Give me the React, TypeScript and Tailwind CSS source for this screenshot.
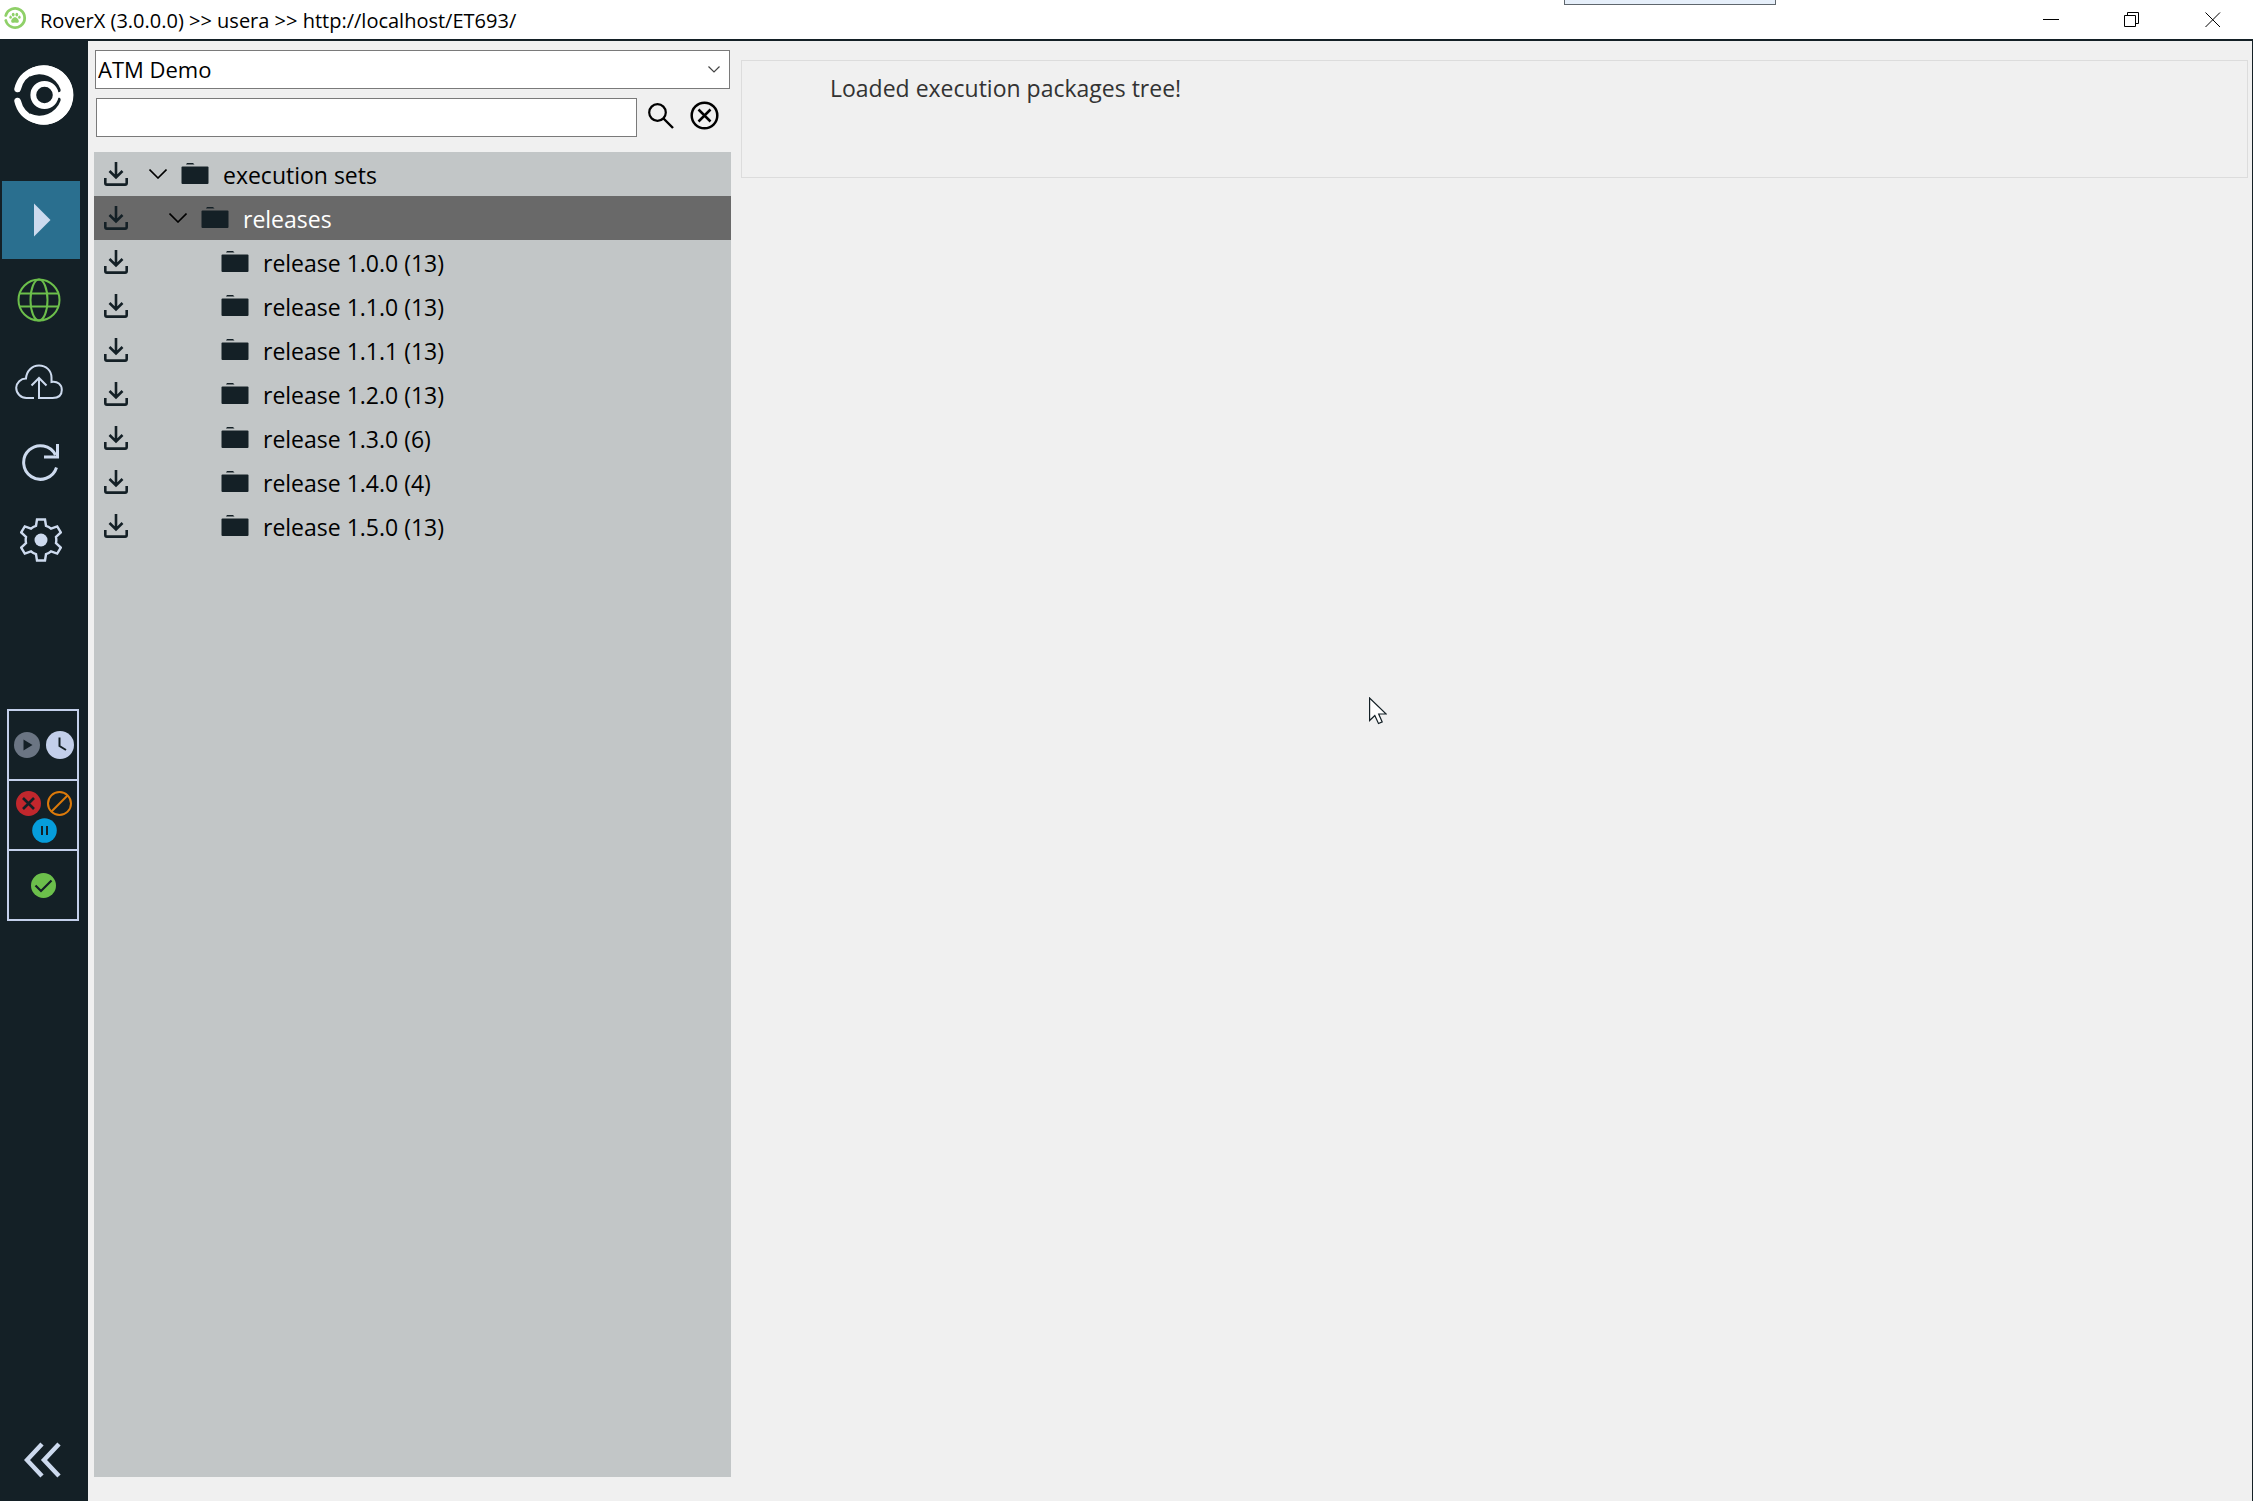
import React, { useState } from 'react';

type IconProps = { className?: string };

interface TreeNode {
  id: string;
  label: string;
  level: number;
  expandable?: boolean;
}

const TREE: TreeNode[] = [
  { id: 'sets', label: 'execution sets', level: 0, expandable: true },
  { id: 'releases', label: 'releases', level: 1, expandable: true },
  { id: 'r100', label: 'release 1.0.0 (13)', level: 2 },
  { id: 'r110', label: 'release 1.1.0 (13)', level: 2 },
  { id: 'r111', label: 'release 1.1.1 (13)', level: 2 },
  { id: 'r120', label: 'release 1.2.0 (13)', level: 2 },
  { id: 'r130', label: 'release 1.3.0 (6)', level: 2 },
  { id: 'r140', label: 'release 1.4.0 (4)', level: 2 },
  { id: 'r150', label: 'release 1.5.0 (13)', level: 2 },
];

const INDENT = ['pl-0', 'pl-5', 'pl-10'];

function AppIcon({ className }: IconProps) {
  return (
    <svg viewBox="0 0 24 24" className={className} fill="none">
      <path d="M2.8 9.5a9.6 9.6 0 1 1 0 5" stroke="#8fd068" strokeWidth="2.8" strokeLinecap="round" />
      <g fill="#8fd068">
        <ellipse cx="10.2" cy="8.6" rx="1.4" ry="1.9" />
        <ellipse cx="13.8" cy="8.6" rx="1.4" ry="1.9" />
        <ellipse cx="7.6" cy="11.2" rx="1.2" ry="1.6" />
        <ellipse cx="16.4" cy="11.2" rx="1.2" ry="1.6" />
        <path d="M12 11.2c2 0 3.8 2.4 3.8 4 0 1.8-2 1.6-3.8 1.2-1.8.4-3.8.6-3.8-1.2 0-1.6 1.8-4 3.8-4z" />
      </g>
    </svg>
  );
}

function Logo({ className }: IconProps) {
  return (
    <svg viewBox="0 0 60 60" className={className} fill="none" stroke="#fff" strokeLinecap="round">
      <path d="M3.6 24A26.3 26.3 0 1 1 3.6 36" strokeWidth="6.6" />
      {/* the ring gets thicker towards the right */}
      <path
        d="M14 5A29.6 29.6 0 1 1 14 55L16 48.4A22 22 0 0 0 46.400 36C47.600 32.500 44 31.800 43 34V26C44 28.200 47.600 27.500 46.400 24A22 22 0 0 0 16 11.600z"
        fill="#fff"
        stroke="none"
      />
      <circle cx="30.5" cy="30" r="11.2" strokeWidth="5.8" />
    </svg>
  );
}

function PlayIcon({ className }: IconProps) {
  return (
    <svg viewBox="0 0 18 34" className={className} fill="#cddaee">
      <path d="M1 .5 17.5 17 1 33.5z" />
    </svg>
  );
}

function GlobeIcon({ className }: IconProps) {
  return (
    <svg viewBox="0 0 44 44" className={className} fill="none" stroke="#6cbf4b" strokeWidth="2">
      <circle cx="22" cy="22" r="20.5" />
      <ellipse cx="22" cy="22" rx="8.5" ry="20.5" />
      <path d="M2.5 15.5h39M2.5 28.5h39" />
    </svg>
  );
}

function CloudIcon({ className }: IconProps) {
  return (
    <svg viewBox="0 0 48 36" className={className} fill="none" stroke="#cddaee" strokeWidth="2">
      <path d="M19 34h-7.5A10.2 10.2 0 0 1 1.200 23.8 9.8 9.8 0 0 1 11 14.5c.5-7.500 6-13 13-13s12.5 5 12.5 12v4.500c6-1 10.300 2.500 10.300 8S43 34 37.500 34H24V14" />
      <path d="M16.5 21.500 24 14l7.500 7.500" />
    </svg>
  );
}

function RefreshIcon({ className }: IconProps) {
  return (
    <svg viewBox="0 0 38 38" className={className} fill="none" stroke="#cddaee" strokeWidth="3">
      <path d="M34.5 24.500A16.8 16.8 0 1 1 33.500 12" />
      <path d="M35.500 1v13H22" />
    </svg>
  );
}

function GearIcon({ className }: IconProps) {
  return (
    <svg viewBox="0 0 42 44" className={className}>
      <path
        d="M17 1.500h8l1 6.300c2 .6 3.600 1.500 5 2.800l6.200-2.200 3.600 6-4.800 4.600c.4 2 .4 4 0 6l4.800 4.600-3.600 6-6.200-2.200c-1.400 1.300-3 2.200-5 2.800l-1 6.300h-8l-1-6.300c-2-.6-3.600-1.500-5-2.800l-6.200 2.200-3.600-6L6 25c-.4-2-.4-4 0-6l-4.800-4.600 3.600-6 6.200 2.200c1.400-1.300 3-2.200 5-2.800z"
        fill="none"
        stroke="#cddaee"
        strokeWidth="2.4"
      />
      <circle cx="21" cy="22" r="6.5" fill="#cddaee" />
    </svg>
  );
}

function CollapseIcon({ className }: IconProps) {
  return (
    <svg viewBox="0 0 38 36" className={className} fill="none" stroke="#cddaee" strokeWidth="4.5">
      <path d="M18 2 3 18l15 16M35 2 20 18l15 16" />
    </svg>
  );
}

function DownloadIcon({ className }: IconProps) {
  return (
    <svg viewBox="0 0 24 24" className={className} fill="none" stroke="#142026" strokeWidth="2.6">
      <path d="M12 0v15M5.5 9l6.5 6.5L18.5 9" />
      <path d="M1.300 16v5c0 1 .6 1.600 1.600 1.600h18.200c1 0 1.600-.6 1.600-1.600v-5" />
    </svg>
  );
}

function FolderIcon({ className }: IconProps) {
  return (
    <svg viewBox="0 0 28 22" className={className} fill="#142026">
      <path d="M5 1.500 6 0h6l1.500 1.500z" />
      <rect x=".5" y="3.5" width="27" height="17.5" rx="1" />
    </svg>
  );
}

function ChevronDown({ className }: IconProps) {
  return (
    <svg viewBox="0 0 18 10" className={className} fill="none" stroke="#000" strokeWidth="1.6">
      <path d="M.5.5 9 9 17.5.5" />
    </svg>
  );
}

function StatusPanel() {
  return (
    <div className="ml-[7px] mt-[147px] w-[72px] divide-y-2 divide-[#c3cfea] border-2 border-[#c3cfea]">
      <div className="flex h-[70px] items-center justify-center gap-1.5 pl-0.5">
        <svg viewBox="0 0 26 28" className="h-7 w-[26px]">
          <circle cx="13" cy="14" r="13" fill="#6b7583" />
          <path d="M9.5 8.5v11L18.5 14z" fill="#142026" />
        </svg>
        <svg viewBox="0 0 28 28" className="size-7">
          <circle cx="14" cy="14" r="14" fill="#c3cfea" />
          <path d="M13.5 6.5V15l6.5 4" fill="none" stroke="#142026" strokeWidth="2" />
        </svg>
      </div>
      <div className="flex h-[70px] flex-wrap content-center items-center justify-center gap-x-1.5 gap-y-0.5 pl-0.5 pt-1">
        <svg viewBox="0 0 25 25" className="size-[25px]">
          <circle cx="12.5" cy="12.5" r="12.5" fill="#c1272d" />
          <path d="m7 7 11 11M18 7 7 18" stroke="#142026" strokeWidth="2.6" />
        </svg>
        <svg viewBox="0 0 25 25" className="size-[25px]" fill="none" stroke="#dd7a0a" strokeWidth="2">
          <circle cx="12.5" cy="12.5" r="11.5" />
          <path d="M4.5 20.5 20.5 4.5" />
        </svg>
        <svg viewBox="0 0 25 25" className="size-[25px]">
          <circle cx="12.5" cy="12.5" r="12.3" fill="#069ddb" />
          <path d="M10 8v9M15 8v9" stroke="#142026" strokeWidth="2" />
        </svg>
      </div>
      <div className="flex h-[68px] items-center justify-center">
        <svg viewBox="0 0 25 25" className="size-[25px]">
          <circle cx="12.5" cy="12.5" r="12.5" fill="#6cbf4b" />
          <path d="m4.5 12.5 5.5 5.5L20.5 7.5" fill="none" stroke="#142026" strokeWidth="2.2" />
        </svg>
      </div>
    </div>
  );
}

function TitleBar() {
  return (
    <header className="relative flex h-[41px] shrink-0 items-center border-b-2 border-[#142026] bg-white">
      <AppIcon className="mb-1 ml-[3px] size-6" />
      <h1 className="ml-[13px] mt-0.5 text-[20px] leading-6">
        RoverX (3.0.0.0) &gt;&gt; usera &gt;&gt; http://localhost/ET693/
      </h1>
      <div className="ml-auto flex h-full items-center">
        <button aria-label="Minimize" className="flex h-full w-[81px] items-center justify-center">
          <svg viewBox="0 0 16 16" className="size-4" stroke="#000">
            <path d="M0 7.5h16" />
          </svg>
        </button>
        <button aria-label="Restore" className="flex h-full w-[81px] items-center justify-center">
          <svg viewBox="0 0 16 16" className="size-4" fill="none" stroke="#000">
            <path d="M.5 3.5h11v11H.5zM3.5 3.5v-3h11v11h-3" />
          </svg>
        </button>
        <button aria-label="Close" className="flex h-full w-[81px] items-center justify-center">
          <svg viewBox="0 0 16 16" className="size-4" stroke="#000">
            <path d="m.5.5 14.5 14.5M15 .5.5 15" />
          </svg>
        </button>
      </div>
      {/* edge of the docked connection bar */}
      <div className="absolute left-[1564px] top-0 h-[5px] w-[212px] border-x border-b border-[#5f666d] bg-[#e6effa]" />
    </header>
  );
}

function Sidebar() {
  return (
    <nav className="flex w-[88px] shrink-0 flex-col bg-[#142026]">
      <Logo className="ml-3.5 mt-6 size-[60px]" />
      <button aria-label="Run" className="ml-0.5 mt-14 flex size-[78px] items-center justify-center bg-[#2a6f8f] pl-0.5">
        <PlayIcon className="h-[34px] w-[18px]" />
      </button>
      <button aria-label="Web" className="ml-[17px] mt-[19px] w-11">
        <GlobeIcon className="size-11" />
      </button>
      <button aria-label="Upload" className="ml-[15px] mt-[42px] w-12">
        <CloudIcon className="h-9 w-12" />
      </button>
      <button aria-label="Refresh" className="ml-[22px] mt-[43px] w-[38px]">
        <RefreshIcon className="size-[38px]" />
      </button>
      <button aria-label="Settings" className="ml-5 mt-[37px] w-[42px]">
        <GearIcon className="h-11 w-[42px]" />
      </button>
      <StatusPanel />
      <button aria-label="Collapse" className="mb-[23px] ml-6 mt-auto w-[38px]">
        <CollapseIcon className="h-9 w-[38px]" />
      </button>
    </nav>
  );
}

export default function App() {
  const [selected, setSelected] = useState('releases');
  const [query, setQuery] = useState('');

  return (
    <div className="relative flex h-screen flex-col bg-[#f0f0f0] font-['Open_Sans','Noto_Sans',sans-serif] text-black">
      <TitleBar />
      <div className="flex min-h-0 flex-1 border-r border-[#142026]">
        <Sidebar />

        <section className="ml-1.5 flex w-[637px] shrink-0 flex-col pb-6">
          <div className="relative mx-px mt-[9px]">
            <select
              aria-label="Project"
              className="block h-[39px] w-full appearance-none border border-[#7a7a7a] bg-white pb-0.5 pl-0.5 text-[22px] leading-7"
            >
              <option>ATM Demo</option>
            </select>
            <svg
              viewBox="0 0 12 7"
              className="pointer-events-none absolute right-2.5 top-4 h-[7px] w-3"
              fill="none"
              stroke="#444"
              strokeWidth="1.2"
            >
              <path d="M.5.5 6 6 11.5.5" />
            </svg>
          </div>
          <div className="ml-0.5 mt-[9px] flex items-center">
            <input
              type="text"
              aria-label="Search"
              value={query}
              onChange={(e) => setQuery(e.target.value)}
              className="h-[39px] w-[541px] border border-[#7a7a7a] bg-white px-1 text-[22px] outline-none"
            />
            <button aria-label="Find" className="mb-1 ml-[11px]">
              <svg viewBox="0 0 26 26" className="size-[26px]" fill="none" stroke="#000">
                <circle cx="9.5" cy="9.5" r="8.3" strokeWidth="2.2" />
                <path d="m15 15 10 10" strokeWidth="2.4" />
              </svg>
            </button>
            <button aria-label="Clear" className="mb-1 ml-4">
              <svg viewBox="0 0 29 29" className="size-[29px]" fill="none" stroke="#000" strokeWidth="2.5">
                <circle cx="14.5" cy="14.5" r="12.8" />
                <path d="m8.5 8.5 12 12M20.5 8.5l-12 12" />
              </svg>
            </button>
          </div>

          <ul className="mt-[15px] flex-1 bg-[#c2c6c7]">
            {TREE.map((node) => {
              const isSelected = node.id === selected;
              return (
                <li
                  key={node.id}
                  onClick={() => setSelected(node.id)}
                  className={`flex h-11 items-center pl-2.5 ${isSelected ? 'bg-[#696969] text-white' : ''}`}
                >
                  <button aria-label={`Download ${node.label}`}>
                    <DownloadIcon className="size-6" />
                  </button>
                  <div className={`ml-[21px] flex items-center ${INDENT[node.level]}`}>
                    <span className="w-[18px]">{node.expandable && <ChevronDown className="h-2.5 w-[18px]" />}</span>
                    <FolderIcon className="ml-3.5 h-[22px] w-7" />
                    <span className="ml-3.5 mt-0.5 text-[23px] leading-7">{node.label}</span>
                  </div>
                </li>
              );
            })}
          </ul>
        </section>

        <main className="ml-2.5 mr-1 mt-[19px] flex-1">
          <div className="h-[118px] border border-[#dcdcdc] pl-[88px] pt-[13px]">
            <p className="text-[23px] leading-7 text-[#333]">Loaded execution packages tree!</p>
          </div>
        </main>
      </div>

      {/* mouse pointer */}
      <svg
        viewBox="0 0 18 28"
        className="absolute left-[1369px] top-[697px] h-7 w-[18px]"
        fill="#fff"
        stroke="#142026"
        strokeWidth="1.2"
      >
        <path d="M.6 1v22.500l5.200-5 3.700 8 3.700-1.600-3.500-7.900h7.500z" />
      </svg>
    </div>
  );
}
